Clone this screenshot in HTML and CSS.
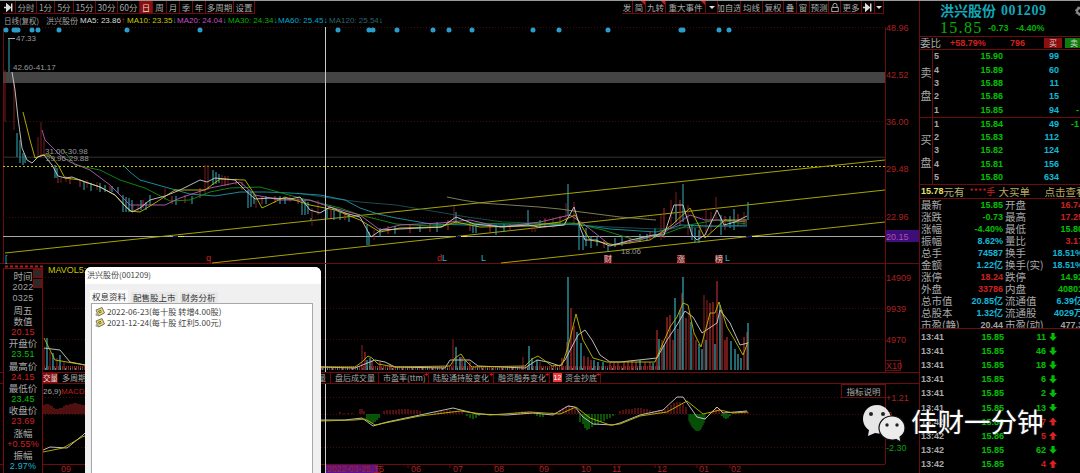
FILE: index.html
```html
<!DOCTYPE html>
<html lang="zh">
<head>
<meta charset="utf-8">
<title>洪兴股份 001209</title>
<link rel="stylesheet" href="styles.css">
</head>
<body>
<div class="app">
  <div class="main">
    <div class="toolbar">
      <div class="tools tools-left">
        <span class="tool"><svg class="ico" viewBox="0 0 11 9"><path d="M0 4.5h5M3 1l4 3.500-4 3.500z M8.500 0v9" stroke="#ddd" stroke-width="1.600" fill="#ddd"/></svg></span>
        <span class="tool">分时</span><span class="tool">1分</span><span class="tool">5分</span><span class="tool">15分</span><span class="tool">30分</span><span class="tool">60分</span>
        <span class="tool tool-on">日</span><span class="tool">周</span><span class="tool">月</span><span class="tool">季</span><span class="tool">年</span><span class="tool">多周期</span><span class="tool">设置</span>
      </div>
      <div class="tools tools-right">
        <span class="tool">发</span><span class="tool flag">简</span><span class="tool flag">九转</span><span class="tool flag">重大事件</span>
        <span class="tool"><i class="caret"></i></span>
        <span class="tool">加自选</span><span class="tool">均线</span><span class="tool">复权</span><span class="tool">叠</span><span class="tool">窗</span><span class="tool">预测</span>
        <span class="tool"><svg class="ico" viewBox="0 0 9 11"><path d="M2 5V3a2.500 2.500 0 0 1 5 0v2M.5 5.500h8v5h-8z" stroke="#ccc" fill="none"/></svg></span>
        <span class="tool">更多</span>
        <span class="tool"><svg class="ico" viewBox="0 0 11 9"><path d="M0 4.5h5M3 1l4 3.500-4 3.500z M8.500 0v9" stroke="#ddd" stroke-width="1.600" fill="#ddd"/></svg></span>
        <span class="tool"><i class="caret"></i></span>
      </div>
    </div>

    <div class="legend">
      <span class="lg-name lg-a">日线(复权)</span>
      <span class="lg-name lg-b">洪兴股份</span>
      <span class="lg lg-5">MA5: 23.86<b class="up">↑</b></span>
      <span class="lg lg-10">MA10: 23.35<b class="dn">↓</b></span>
      <span class="lg lg-20">MA20: 24.04<b class="dn">↓</b></span>
      <span class="lg lg-30">MA30: 24.34<b class="dn">↓</b></span>
      <span class="lg lg-60">MA60: 25.45<b class="dn">↓</b></span>
      <span class="lg lg-120">MA120: 25.54<b class="dn">↓</b></span>
    </div>

    <svg class="pane pane-price" viewBox="0 27 919 237">
      <path class="frame" d="M3.500 27V263M885.500 27V263M0 263.500H919"/>
      <path class="grid" d="M3 27.500H885M3 121.500H885M3 217.500H885"/>
      <rect class="band" x="3" y="72" width="882" height="11"/>
      <rect class="band-thin" x="3" y="156.500" width="882" height="1.500"/>
      <path class="dots" d="M6 30h.01M14 30h.01M16 30h.01M18 30h.01M32 30h.01M38 30h.01M59 30h.01M127 30h.01M200 30h.01M338 30h.01M369 30h.01M373 30h.01M397 30h.01M433 30h.01M449 30h.01M472 30h.01M533 30h.01M559 30h.01M608 30h.01M681 30h.01M683 30h.01M719 30h.01M729 30h.01"/>
      <path class="dash-y" d="M3 166.500H885"/>
      <path class="hline" d="M3 236.500H885"/>
      <path class="chan" d="M5 253L885 160M212 263L885 190M501 263L885 222"/>
      <path class="hblue" d="M173 236.500h5M456 236.500h5M746 236.500h6"/>
      <path class="hyel" d="M178 236.500h6M461 236.500h6M752 236.500h6"/>

      <path class="c-dred" d="M5 70V122M14 83V130M38 137V157M41 122V157M44 140V156M61 178V183M66 176V182M87 180V188M97 182V190M133 205V212M138 204V211M165 188V200M205 165V195M208 165V190M222 175V185M228 176V186M236 178V185M256 200V208M290 195V202M312 208V226M318 200V215M454 206V225M374 230V240M532 225V232M535 225V232M553 218V228M566 203V225M574 202V225M661 215V240M671 200V230M676 192V225M688 205V235M706 208V235M711 212V232M716 197V220M744 212V225"/>
      <path class="c-red" d="M58 178V183M70 177V184M80 180V187M110 186V191M143 200V208M172 196V204M185 195V203M200 188V198M225 176V186M242 182V190M262 197V204M275 196V203M298 198V204M331 210V218M345 212V220M388 226V234M410 225V233M430 223V232M448 220V230M470 222V231M490 224V232M510 224V231M545 218V228M560 216V226M604 240V248M630 236V244M650 232V240M664 208V238M680 200V226M700 225V238M725 216V230M738 214V226"/>
      <path class="c-cy" d="M9 38V72M17 133V157M20 140V163M23 153V165M25 155V163M55 165V178M57 168V178M84 181V190M91 183V191M100 183V192M105 185V192M112 186V192M118 187V193M123 195V212M126 197V212M129 198V212M132 200V212M141 200V210M146 202V210M150 195V205M176 196V205M192 196V204M213 170V185M216 172V184M219 174V183M248 190V208M251 192V207M254 194V204M266 196V204M280 196V204M285 197V204M302 198V215M305 200V215M308 202V214M311 218V221M327 208V218M334 210V220M340 212V220M349 214V222M367 225V245M369 232V245M380 228V237M395 226V234M420 225V232M437 222V232M456 212V224M473 225V233M476 225V233M496 225V235M504 224V232M528 210V225M540 220V228M568 184V215M579 225V250M583 235V250M586 228V246M591 236V248M597 236V246M608 245V252M615 238V247M622 236V246M640 234V242M647 234V240M655 228V238M676 205V222M683 184V222M692 225V240M695 228V242M699 230V243M721 215V235M730 216V228M734 209V230M748 202V220"/>

      <polyline class="ma ma120" points="297,193 330,198 360,202 396,205 432,211 467,217 503,222 560,224 610,227 656,229 700,227 747,225"/>
      <polyline class="ma ma250" points="447,197 462,200 481,203 510,205 539,207 560,209 581,212 620,217 656,220"/>
      <polyline class="ma ma60" points="123,165 130,172 140,180 165,187 190,194 215,196 240,192 265,192 290,193 320,195 345,200 360,208 378,214 396,218 431,224 467,225 503,225 540,225 574,224 610,229 656,232 668,229 681,225 710,226 747,226"/>
      <polyline class="ma ma30" points="63,150 75,165 100,170 120,180 145,188 170,201 190,200 210,192 230,188 260,187 300,198 340,208 360,215 396,224 431,226 467,223 517,224 574,223 603,230 635,240 667,233 689,225 717,220 747,224"/>
      <polyline class="ma ma20" points="42,130 45,140 60,155 70,162 90,170 110,185 130,205 150,205 165,205 180,198 210,188 240,182 255,195 280,200 310,200 330,207 360,215 380,230 400,225 440,223 470,220 500,227 540,222 570,215 585,225 610,245 640,240 665,232 690,215 705,220 725,220 747,222"/>
      <polyline class="ma ma10" points="23,112 30,140 35,158 42,155 50,155 58,165 65,178 80,180 100,187 115,195 130,211 140,212 155,203 175,190 205,190 220,179 245,180 255,195 262,208 285,197 310,205 335,210 360,220 380,232 400,228 440,227 456,222 480,227 530,226 560,222 575,215 590,240 615,245 650,240 672,225 690,208 705,238 725,220 747,220"/>
      <polyline class="ma ma5" points="12,72 15,90 18,118 22,148 27,160 32,163 38,157 44,155 52,165 58,176 65,178 72,177 85,182 100,187 115,195 125,206 132,212 140,208 150,200 165,196 180,190 200,180 207,182 215,178 235,180 245,190 255,199 270,198 290,199 300,197 310,210 320,213 330,207 345,213 360,217 371,237 381,230 399,229 421,228 442,227 456,217 474,224 503,227 528,225 539,227 553,226 564,225 574,207 581,230 585,240 596,240 610,246 631,240 653,235 664,235 674,205 683,205 692,235 697,240 705,235 717,210 724,225 735,222 747,216"/>
      <path class="cursor" d="M325.500 27V263"/>

      <path class="tickm" d="M8 38.500h7"/>
      <text class="t-note" x="16" y="41">47.33</text>
      <text class="t-note" x="13" y="70">42.60-41.17</text>
      <text class="t-note" x="45" y="154">31.00-30.98</text>
      <text class="t-note" x="46" y="161">29.96-29.88</text>
      <text class="t-note" x="621" y="254">18.06</text>
      <text class="t-ax" x="886" y="31">48.96</text>
      <text class="t-ax" x="886" y="78">42.52</text>
      <text class="t-ax" x="886" y="125">36.00</text>
      <text class="t-ax" x="886" y="172">29.48</text>
      <text class="t-ax" x="886" y="220">22.96</text>
      <rect class="cur-box" x="886" y="230" width="33" height="12"/>
      <text class="t-ax t-cur" x="886" y="239.500">20.15</text>
      <text class="t-mk t-mk-cy" x="5" y="262">[</text>
      <text class="t-mk t-mk-rd" x="206" y="261">q</text>
      <text class="t-mk t-mk-rd" x="437" y="261">d</text>
      <text class="t-mk t-mk-cy" x="442" y="261">L</text>
      <text class="t-mk t-mk-cy" x="481" y="261">L</text>
      <rect class="mk-box" x="604" y="255" width="8" height="8"/><text class="t-box" x="604" y="262">财</text>
      <rect class="mk-box" x="677" y="255" width="8" height="8"/><text class="t-box" x="677" y="262">涨</text>
      <rect class="mk-box" x="715" y="255" width="8" height="8"/><text class="t-box" x="715" y="262">榜</text>
      <text class="t-mk t-mk-cy" x="725" y="261">L</text>
    </svg>

    <svg class="pane pane-vol" viewBox="0 264 919 108">
      <path class="frame" d="M885.500 264V372"/>
      <path class="grid" d="M3 277.500H885M3 308.500H885M3 339.500H885"/>
      <path class="vred-line" d="M5 266.500h38"/>
      <text class="t-ma" x="48" y="273">MAVOL5:</text>
      <path class="comb comb-red" d="M44 368H85M321 368H660"/>
      <path class="comb-cy" d="M45 369H85M322 369H640"/>
      <path class="c-dred c-wide" d="M44 348V370M50 352V370M57 358V370M64 362V370M362 345V370M453 339V370M523 357V370M540 362V370M704 295V370M707 300V370M693 333V370M689 312V370"/>
      <path class="c-red c-wide" d="M365 352V370M372 360V370M380 362V370M390 364V370M462 357V370M470 362V370M562 358V370M567 342V370M571 308V370M574 326V370M584 356V370M588 357V370M591 360V370M610 363V370M614 363V370M618 363V370M624 361V370M628 361V370M632 360V370M636 362V370M645 362V370M650 362V370M657 330V370M662 340V370M667 317V370M670 315V370M673 340V370M678 329V370M682 293V370M686 318V370M696 340V370M710 303V370M713 302V370M717 281V370M722 310V370M725 340V370M727 337V370M744 337V370M747 332V370"/>
      <path class="c-cy c-wide" d="M47 338V370M53 353V370M60 355V370M367 360V370M370 358V370M456 347V370M460 357V370M465 361V370M529 346V370M532 358V370M537 360V370M568 277V370M577 332V370M581 343V370M594 360V370M598 362V370M603 362V370M640 360V370M653 363V370M659 339V370M664 345V370M675 298V370M680 310V370M683 277V370M691 322V370M699 344V370M702 349V370M706 340V370M715 344V370M720 305V370M731 341V370M735 349V370M738 354V370M741 358V370M748 323V370"/>
      <polyline class="ma ma5" points="44,348 60,350 70,362 85,365"/>
      <polyline class="ma ma10" points="44,338 50,350 55,360 85,365"/>
      <polyline class="ma ma5" points="321,367 355,368 365,364 375,360 385,362 395,367 445,368 450,360 470,360 478,366 525,368 537,360 548,362 560,366 565,360 578,335 585,330 592,340 600,355 610,362 620,362 657,358 667,340 677,325 685,311 693,317 702,333 717,323 720,310 730,323 740,345 748,343"/>
      <polyline class="ma ma10" points="321,367 355,367 362,362 368,356 372,358 378,364 395,367 450,366 455,358 461,354 465,360 472,367 525,366 532,359 538,356 544,360 552,366 562,365 568,347 576,314 583,340 593,358 607,362 620,362 655,362 660,350 670,327 677,317 683,303 688,305 694,333 701,347 710,313 715,313 719,302 727,327 733,337 743,355 748,342"/>
      <path class="cursor" d="M325.500 264V372"/>
      <text class="t-ax" x="886" y="280.500">14909</text>
      <text class="t-ax" x="886" y="311.500">9939</text>
      <text class="t-ax" x="886" y="342.500">4970</text>
      <rect class="x-box" x="885.500" y="360.500" width="15" height="10"/>
      <text class="t-ax" x="886" y="368.500">X10</text>
    </svg>

    <div class="tabs">
      <span class="tab tab-on">交量</span>
      <span class="tab">多周期同列</span>
      <span class="tab tab-end">换手量</span>
      <span class="tab">盘后成交量</span>
      <span class="tab star">市盈率(ttm)</span>
      <span class="tab star">陆股通持股变化</span>
      <span class="tab star">融资融券变化</span>
      <span class="tab star"><b class="tab-n">12</b>资金抄底</span>
    </div>

    <svg class="pane pane-macd" viewBox="0 384 919 89">
      <path class="frame" d="M885.500 384V464M0 464.500H885M36 464V468M408 464V468M450 464V468M495 464V468M541 464V468M583 464V468M620 464V468M655 464V468M697 464V468M730 464V468"/>
      <path class="grid" d="M3 397.500H885M3 414.500H885M3 447.500H885"/>
      <text class="t-macd-a" x="43" y="394">26,9)</text>
      <text class="t-macd-b" x="61" y="394">MACD:</text>
      <path class="hist-r" d="M44 414V405M46 414V404M48 414V404M50 414V405M52 414V406M54 414V408M56 414V409M58 414V409M60 414V408M62 414V408M64 414V406M66 414V405M68 414V405M70 414V404M72 414V404M74 414V403M76 414V403M78 414V404M80 414V404M82 414V405M84 414V405M320 414V412M340 414V412M344 414V413M348 414V413M352 414V413M360 414V409M362 414V409M364 414V411M384 414V411M387 414V410M390 414V410M393 414V410M396 414V410M399 414V409M402 414V409M405 414V409M408 414V409M411 414V410M414 414V410M417 414V410M420 414V411M435 414V412M438 414V412M441 414V411M444 414V411M447 414V410M450 414V410M453 414V411M456 414V411M459 414V411M462 414V412M510 414V413M513 414V413M516 414V412M519 414V412M522 414V411M525 414V411M528 414V411M531 414V412M534 414V412M552 414V412M556 414V412M560 414V410M563 414V408M566 414V406M569 414V405M572 414V406M575 414V408M578 414V411M620 414V411M623 414V410M626 414V409M629 414V409M632 414V409M635 414V408M638 414V408M641 414V408M644 414V409M647 414V409M650 414V410M653 414V411M656 414V411M659 414V410M662 414V410M665 414V409M668 414V407M671 414V405M674 414V403M677 414V402M680 414V402M683 414V404M686 414V407M710 414V412M713 414V410M716 414V407M719 414V408M722 414V411M733 414V413M736 414V412M739 414V412M742 414V412M745 414V411M748 414V412"/>
      <path class="hist-g" d="M367 414V420M369 414V422M371 414V423M373 414V423M375 414V422M377 414V420M379 414V418M467 414V416M470 414V418M473 414V419M476 414V418M479 414V416M537 414V416M540 414V417M543 414V417M580 414V422M583 414V424M585 414V428M587 414V430M589 414V429M592 414V427M595 414V425M598 414V424M601 414V422M604 414V421M607 414V419M610 414V418M613 414V416M722 414V416M724 414V418M726 414V419M728 414V418M730 414V416"/>
      <path class="hist-dg" d="M689 414V421M690 414V423M691 414V425M692 414V427M693 414V428M694 414V429M695 414V430M696 414V431M697 414V431M698 414V431M699 414V431M700 414V430M701 414V429M702 414V427M703 414V425M704 414V423M705 414V420"/>
      <polyline class="ma ma5" points="43,450 50,447 67,448 83,435 85,433"/>
      <polyline class="ma ma10" points="43,452 63,448 82,437 85,436"/>
      <polyline class="ma ma5" points="321,420 345,420 362,418 373,426 387,422 420,415 453,408 477,414 507,415 533,413 553,415 568,406 575,407 583,417 593,424 613,425 620,423 640,415 663,410 677,397 683,397 697,417 705,419 717,407 723,413 747,411"/>
      <polyline class="ma ma10" points="321,421 355,420 365,419 375,425 395,421 420,416 460,411 490,415 530,412 560,414 576,407 590,418 610,425 620,424 640,416 667,412 687,401 703,414 720,410 733,413 748,412"/>
      <path class="cursor" d="M325.500 384V473"/>
      <text class="t-ax" x="886" y="400.500">+1.21</text>
      <text class="t-ax" x="887" y="417.500">0</text>
      <text class="t-ax t-gn" x="886" y="451">-2.30</text>
      <rect class="date-box" x="326" y="465" width="52" height="8"/>
      <text class="t-x t-date" x="327" y="472">2022-03-25,五</text>
      <text class="t-x" x="379" y="472">5</text>
      <text class="t-x" x="61" y="472">09</text>
      <text class="t-x" x="411" y="472">06</text>
      <text class="t-x" x="453" y="472">07</text>
      <text class="t-x" x="494" y="472">08</text>
      <text class="t-x" x="539" y="472">09</text>
      <text class="t-x" x="581" y="472">10</text>
      <text class="t-x" x="612" y="472">11</text>
      <text class="t-x" x="657" y="472">12</text>
      <text class="t-x" x="699" y="472">01</text>
      <text class="t-x" x="731" y="472">02</text>
    </svg>
    <div class="explain">指标说明</div>
  </div>

  <aside class="panel">
    <div class="head">
      <div class="title"><span>洪兴股份</span><span class="code">001209</span><svg class="gear" viewBox="0 0 10 10"><circle cx="5" cy="5" r="3" fill="none" stroke="#888" stroke-width="2.400"/><circle cx="5" cy="5" r="4.500" fill="none" stroke="#888" stroke-dasharray="1.500 2"/></svg></div>
      <div class="quote"><span class="px">15.85</span><span class="chg">-0.73</span><span class="chg">-4.40%</span></div>
    </div>
    <div class="ratio">
      <span class="lb-big">委比</span><span class="rt-v">+58.79%</span><span class="rt-n">796</span>
      <span class="btn btn-buy">买</span><span class="btn btn-sell">卖</span>
    </div>
    <div class="book book-ask">
      <div class="side"><span>卖</span><span>盘</span></div>
      <div class="rows">
        <div class="brow"><i>5</i><b>15.90</b><em>99</em></div>
        <div class="brow"><i>4</i><b>15.89</b><em>60</em></div>
        <div class="brow"><i>3</i><b>15.88</b><em>11</em></div>
        <div class="brow"><i>2</i><b>15.86</b><em>15</em></div>
        <div class="brow"><i>1</i><b>15.85</b><em>94</em><u>-</u></div>
      </div>
    </div>
    <div class="book book-bid">
      <div class="side"><span>买</span><span>盘</span></div>
      <div class="rows">
        <div class="brow"><i>1</i><b>15.84</b><em>49</em><u>-1</u></div>
        <div class="brow"><i>2</i><b>15.83</b><em>112</em></div>
        <div class="brow"><i>3</i><b>15.82</b><em>124</em></div>
        <div class="brow"><i>4</i><b>15.81</b><em>156</em></div>
        <div class="brow"><i>5</i><b>15.80</b><em>634</em></div>
      </div>
    </div>
    <div class="bigorder"><span class="bo-y">15.78</span><span class="bo-g">元有</span><span class="bo-r">****手</span><span class="bo-l">大买单</span><span class="bo-l">点击查看</span></div>
    <div class="info">
      <div class="irow"><span>最新</span><b class="gn">15.85</b><span>开盘</span><b class="rd">16.74</b></div>
      <div class="irow"><span>涨跌</span><b class="gn">-0.73</b><span>最高</span><b class="rd">17.25</b></div>
      <div class="irow"><span>涨幅</span><b class="gn">-4.40%</b><span>最低</span><b class="gn">15.80</b></div>
      <div class="irow"><span>振幅</span><b class="cy">8.62%</b><span>量比</span><b class="rd">3.17</b></div>
      <div class="irow"><span>总手</span><b class="cy">74587</b><span>换手</span><b class="cy">18.51%</b></div>
      <div class="irow"><span>金额</span><b class="cy">1.22亿</b><span>换手(实)</span><b class="cy">18.51%</b></div>
      <div class="irow"><span>涨停</span><b class="rd">18.24</b><span>跌停</span><b class="gn">14.92</b></div>
      <div class="irow"><span>外盘</span><b class="rd">33786</b><span>内盘</span><b class="gn">40801</b></div>
      <div class="irow"><span>总市值</span><b class="cy">20.85亿</b><span>流通值</span><b class="cy">6.39亿</b></div>
      <div class="irow"><span>总股本</span><b class="cy">1.32亿</b><span>流通股</span><b class="cy">4029万</b></div>
      <div class="irow"><span>市盈(静)</span><b class="gy">20.44</b><span>市盈(动)</span><b class="gy">477.3</b></div>
    </div>
    <div class="ticks">
      <div class="trow"><span>13:41</span><b>15.85</b><em>11</em><i class="arr arr-d"></i></div>
      <div class="trow"><span>13:41</span><b>15.85</b><em>46</em><i class="arr arr-d"></i></div>
      <div class="trow"><span>13:41</span><b>15.85</b><em>18</em><i class="arr arr-d"></i></div>
      <div class="trow"><span>13:41</span><b>15.85</b><em>6</em><i class="arr arr-d"></i></div>
      <div class="trow"><span>13:41</span><b>15.85</b><em>2</em><i class="arr arr-d"></i></div>
      <div class="trow"><span>13:41</span><b>15.85</b><em>13</em><i class="arr arr-d"></i></div>
      <div class="trow"><span>13:42</span><b>15.86</b><em class="rd">7</em><i class="arr arr-u"></i></div>
      <div class="trow"><span>13:42</span><b>15.86</b><em class="rd">5</em><i class="arr arr-u"></i></div>
      <div class="trow"><span>13:42</span><b>15.85</b><em>62</em><i class="arr arr-d"></i></div>
      <div class="trow"><span>13:42</span><b>15.85</b><em class="rd">4</em><i class="arr arr-u"></i></div>
    </div>
  </aside>

  <div class="readout">
    <span class="ro-x"></span><span class="ro-s"></span>
    <span class="ro-l">时间</span><span class="ro-v gy">2022</span><span class="ro-v gy">0325</span><span class="ro-l">周五</span>
    <span class="ro-l">数值</span><span class="ro-v rd">20.15</span>
    <span class="ro-l">开盘价</span><span class="ro-v gn">23.51</span>
    <span class="ro-l">最高价</span><span class="ro-v rd">24.15</span>
    <span class="ro-l">最低价</span><span class="ro-v gn">23.45</span>
    <span class="ro-l">收盘价</span><span class="ro-v rd">23.69</span>
    <span class="ro-l">涨幅</span><span class="ro-v rd">+0.55%</span>
    <span class="ro-l">振幅</span><span class="ro-v cy">2.97%</span>
  </div>

  <div class="dialog">
    <div class="dlg-title">洪兴股份(001209)</div>
    <div class="dlg-body">
      <div class="dlg-tabs">
        <span class="dlg-tab dlg-tab-on">权息资料</span><span class="dlg-tab">配售股上市</span><span class="dlg-tab">财务分析</span>
      </div>
      <div class="dlg-list">
        <div class="dlg-item"><svg class="note" viewBox="0 0 10 10"><path d="M1 3l6-2.500 2.500 5.500-6 3z" fill="#e8d66a" stroke="#776"/><path d="M3 4.500l3-1.200M3.600 6l3-1.200" stroke="#665"/><circle cx="2" cy="7.500" r="1.500" fill="#9a9"/></svg>2022-06-23(每十股 转增4.00股)</div>
        <div class="dlg-item"><svg class="note" viewBox="0 0 10 10"><path d="M1 3l6-2.500 2.500 5.500-6 3z" fill="#e8d66a" stroke="#776"/><path d="M3 4.500l3-1.200M3.600 6l3-1.200" stroke="#665"/><circle cx="2" cy="7.500" r="1.500" fill="#9a9"/></svg>2021-12-24(每十股 红利5.00元)</div>
      </div>
    </div>
  </div>

  <div class="mark">
    <svg class="mark-ico" viewBox="0 0 44 38">
      <path d="M15 1C7 1 1 7 1 15c0 5 3 9 6 11l-1 6 7-3c2 .5 4 .5 6 .2L30 20C30 9 24 1 15 1z" fill="#e6e6e6"/>
      <circle cx="9" cy="10" r="2" fill="#222"/><circle cx="21" cy="10" r="2" fill="#222"/>
      <path d="M30 12c-8 0-13 6-13 12s5 12 13 12c2 0 3 0 4-.5l5 2.500-1-5c3-2 5-5 5-9 0-6-5-12-13-12z" fill="#ececec" stroke="#111" stroke-width="1.200"/>
      <circle cx="25" cy="21" r="1.700" fill="#222"/><circle cx="35" cy="21" r="1.700" fill="#222"/>
    </svg>
    <span class="mark-t">佳财一分钟</span>
  </div>
</div>
</body>
</html>
```
FILE: styles.css
```css
* { box-sizing: border-box; }
html, body { margin: 0; padding: 0; background: #000; }
body { width: 1080px; height: 473px; overflow: hidden; }
i, em, b, u { font-style: normal; text-decoration: none; font-weight: inherit; }

.app {
  position: relative; display: flex; width: 1080px; height: 473px; overflow: hidden;
  background: #000; border-top: 1px solid #9a9a9a;
  font-family: "Noto Sans CJK SC", "Liberation Sans", sans-serif; color: #a8a8a8;
}
.main { position: relative; width: 919px; flex: none; display: flex; flex-direction: column; }

/* toolbar */
.toolbar { display: flex; justify-content: space-between; height: 13px; padding: 0 35px 0 3px; flex: none; }
.tools { display: grid; height: 13px; font-size: 8.5px; line-height: 12px; }
.tools-left { grid-template-columns: 13px 21px 18px 19px 22px 22px 22px 13px 14px 13px 13px 13px 28px 21px; }
.tools-right { grid-template-columns: 11px 13px 20px 40px 12px 23px 22px 21px 13px 13px 19px 12px 21px 13px 9px; }
.tool { position: relative; display: flex; align-items: center; justify-content: center; white-space: nowrap; border-right: 1px solid #6d0c0c; border-bottom: 1px solid #6d0c0c; overflow: hidden; }
.tool-on { background: #8c0f0f; color: #ddd; }
.flag::after { content: ""; position: absolute; top: 0; right: 0; border-top: 4px solid #e01010; border-left: 4px solid transparent; }
.ico { width: 10px; height: 9px; }
.caret { width: 0; height: 0; border-top: 3px solid #ddd; border-left: 3px solid transparent; border-right: 3px solid transparent; }

/* legend */
.legend { display: flex; align-items: center; height: 13px; flex: none; padding-left: 4px; font-family: "Liberation Sans", sans-serif; font-size: 8px; white-space: nowrap; }
.legend > span { flex: none; }
.lg-name { font-family: "Noto Sans CJK SC", sans-serif; font-size: 8px; color: #a0a0a0; }
.lg-a { width: 42px; font-size: 7.5px; }
.lg-b { width: 34px; }
.lg { display: block; }
.lg b { font-size: 8px; margin-left: 0; }
.lg b.up { color: #d02020; }
.lg b.dn { color: #20a8b0; }
.lg-5 { width: 47px; color: #d8d8d8; }
.lg-10 { width: 50px; color: #c8c800; }
.lg-20 { width: 51px; color: #c050c0; }
.lg-30 { width: 50px; color: #00b400; }
.lg-60 { width: 51px; color: #00a8c8; }
.lg-120 { color: #2a6468; }

/* panes */
.pane { display: block; width: 919px; flex: none; overflow: visible; }
.pane-price { height: 237px; }
.pane-vol { height: 108px; }
.pane-macd { height: 89px; }

.frame { stroke: #6d0c0c; fill: none; }
.grid { stroke: #4a0808; stroke-dasharray: 1 2; fill: none; }
.band { fill: #444; }
.band-thin { fill: #232323; }
.dots { stroke: #2a9dcc; stroke-width: 5; stroke-linecap: round; fill: none; }
.dash-y { stroke: #d0c000; stroke-dasharray: 2 2; fill: none; }
.hline { stroke: #a8a8a8; fill: none; }
.chan { stroke: #a8a400; fill: none; }
.hblue { stroke: #10108a; fill: none; }
.hyel { stroke: #e8e840; fill: none; }
.cursor { stroke: #c8c8c8; fill: none; }
.tickm { stroke: #aaa; fill: none; }
.ma { fill: none; stroke-width: .9; }
.ma5 { stroke: #d0d0d0; }
.ma10 { stroke: #c0bc00; }
.ma20 { stroke: #b460b8; }
.ma30 { stroke: #129212; }
.ma60 { stroke: #1c98a8; }
.ma120 { stroke: #1d5358; }
.ma250 { stroke: #8a8a62; }
.c-red { stroke: #b82a2a; fill: none; }
.c-dred { stroke: #7c1c1c; fill: none; }
.c-cy { stroke: #34aebc; fill: none; }
.c-wide { stroke-width: 1.200; }
.comb { fill: none; stroke-width: 4; stroke-dasharray: 1 1; }
.comb-red { stroke: #8c2020; }
.comb-cy { fill: none; stroke: #2f9aa8; stroke-width: 2; stroke-dasharray: 1 4; }
.vred-line { stroke: #b02020; stroke-width: 2; stroke-dasharray: 3 2; fill: none; }
.hist-r { stroke: #a02020; fill: none; }
.hist-g { stroke: #0ea80e; fill: none; }
.hist-dg { stroke: #0a6a0a; fill: none; }

svg text { font-family: "Liberation Sans", sans-serif; }
.t-note { font-size: 8px; fill: #9a9a9a; }
.t-ax { font-size: 9px; fill: #a82222; }
.t-gn { fill: #10a010; }
.t-cur { fill: #b050b0; }
.cur-box { fill: #3d0e7a; }
.t-mk { font-size: 9px; }
.t-mk-cy { fill: #22b8c8; }
.t-mk-rd { fill: #d02020; }
.mk-box { fill: #7c1414; }
.t-box { font-family: "Noto Sans CJK SC", sans-serif; font-size: 8px; fill: #ccc; }
.t-ma { font-size: 9px; fill: #c8c800; }
.x-box { fill: none; stroke: #6d0c0c; }
.t-macd-a { font-size: 8px; fill: #a0a0a0; }
.t-macd-b { font-size: 8px; fill: #c01818; }
.t-x { font-size: 9px; fill: #a82222; }
.t-date { font-size: 8.500px; font-family: "Liberation Sans", "Noto Sans CJK SC", sans-serif; }
.date-box { fill: #5a148c; }

/* tab bar */
.tabs { display: grid; grid-template-columns: 15px 142px 131px 48px 50px 65px 56px 51px; height: 12px; flex: none; padding-left: 43px; padding-right: 38px; border-top: 1px solid #6d0c0c; border-bottom: 1px solid #6d0c0c; font-size: 8px; line-height: 10px; white-space: nowrap; width: 919px; }
.tab { position: relative; border-right: 1px solid #6d0c0c; padding-left: 4px; overflow: hidden; }
.tab-on { background: #8c0f0f; color: #ddd; padding-left: 0; font-size: 7.500px; }
.tab-end { text-align: right; padding-right: 4px; }
.star::after { content: "+"; position: absolute; top: -2px; right: 0; font: bold 7px/7px "Liberation Sans", sans-serif; color: #e01010; }
.tab-n { display: inline-block; width: 9px; height: 9px; margin-right: 3px; margin-left: -1px; background: #e83a3a; color: #fff; font: 7px/9px "Liberation Sans", sans-serif; text-align: center; vertical-align: top; }
.explain { position: absolute; left: 841px; top: 383px; width: 44px; height: 14px; border: 1px solid #6d0c0c; border-right: 0; background: #000; font-size: 8.500px; line-height: 12px; text-align: center; }

/* right panel */
.panel { width: 161px; flex: none; border-left: 1px solid #6d0c0c; overflow: hidden; display: flex; flex-direction: column; }
.head { height: 36px; flex: none; border-bottom: 1px solid #6d0c0c; padding-left: 20px; }
.title { display: flex; align-items: center; height: 19px; font-size: 14px; line-height: 19px; font-weight: 700; color: #10a8b8; white-space: nowrap; }
.code { font-family: "Liberation Serif", serif; font-size: 14px; margin-left: 5px; letter-spacing: .6px; }
.gear { width: 10px; height: 10px; margin-left: 28px; flex: none; }
.quote { display: flex; align-items: center; height: 16px; color: #00b400; font: bold 9px/16px "Liberation Sans", sans-serif; }
.px { font: 16px/16px "Liberation Serif", serif; letter-spacing: 1.300px; width: 48px; flex: none; }
.chg { width: 28px; flex: none; }

.ratio { display: flex; align-items: center; height: 13px; flex: none; border-bottom: 1px solid #6d0c0c; font: bold 9px/12px "Liberation Sans", sans-serif; color: #d02020; }
.ratio > span { flex: none; }
.lb-big { width: 30px; font: 10.500px/12px "Noto Sans CJK SC", sans-serif; color: #a8a8a8; white-space: nowrap; }
.rt-v { width: 60px; }
.rt-n { width: 34px; }
.btn { height: 10px; font: 8px/10px "Noto Sans CJK SC", sans-serif; text-align: center; color: #ccc; }
.btn-buy { width: 18px; background: #8c0f0f; margin-right: 3px; }
.btn-sell { width: 18px; background: #0d7a0d; }

.book { display: flex; flex: none; border-bottom: 1px solid #6d0c0c; }
.book-ask { height: 68px; }
.book-bid { height: 67px; }
.side { width: 13px; flex: none; display: flex; flex-direction: column; align-items: center; justify-content: center; gap: 12px; border-right: 1px solid #6d0c0c; font-size: 11px; line-height: 11px; }
.rows { flex: 1; display: grid; grid-auto-rows: 1fr; }
.brow { position: relative; display: grid; grid-template-columns: 8px 62px 56px 20px; align-items: center; font: bold 9px/13px "Liberation Sans", sans-serif; color: #00c000; }
.brow i { color: #a8a8a8; padding-left: 1px; }
.brow b { text-align: right; }
.brow em { color: #10b8d8; text-align: right; }
.brow u { text-align: right; }

.bigorder { display: flex; align-items: center; height: 14px; flex: none; border-bottom: 1px solid #6d0c0c; padding-left: 1px; font-size: 10.5px; line-height: 13px; white-space: nowrap; }
.bigorder > span { flex: none; }
.bo-y { font: bold 9px/13px "Liberation Sans", sans-serif; color: #e8e070; }
.bo-g { color: #b8b070; width: 26px; }
.bo-r { color: #c82020; width: 29px; font-size: 9px; }
.bo-l { color: #b8a860; width: 46px; }

.info { height: 130px; flex: none; border-bottom: 1px solid #6d0c0c; overflow: hidden; }
.irow { display: grid; grid-template-columns: 32px 50px 38px 42px; height: 12px; padding-left: 1px; align-items: center; font-size: 10.5px; line-height: 12px; white-space: nowrap; }
.irow b { text-align: right; font: bold 9px/12px "Liberation Sans", "Noto Sans CJK SC", sans-serif; }
.irow span:nth-child(3) { padding-left: 2px; }

.ticks { flex: 1; padding-top: 1px; }
.trow { display: grid; grid-template-columns: 50px 33px 42px 3px 8px; height: 14.1px; padding-left: 1px; align-items: center; font: bold 9px/14px "Liberation Sans", sans-serif; color: #00c000; }
.trow span { color: #a8a8a8; }
.trow b { text-align: right; }
.trow em { text-align: right; grid-column: 3; }
.arr { grid-column: 5; display: block; width: 8px; height: 8px; }
.arr-d { background: #00c000; clip-path: polygon(30% 0, 70% 0, 70% 45%, 100% 45%, 50% 100%, 0 45%, 30% 45%); }
.arr-u { background: #e02020; clip-path: polygon(50% 0, 100% 55%, 70% 55%, 70% 100%, 30% 100%, 30% 55%, 0 55%); }

.gn { color: #00c000; }
.rd { color: #d02020; }
.cy { color: #10b8d8; }
.gy { color: #a0a0a0; }

/* crosshair readout */
.readout { position: absolute; left: 3px; top: 267px; width: 40px; height: 206px; display: flex; flex-direction: column; align-items: center; background: #000; border: 1px solid #7a0c0c; padding-top: 2px; }
.ro-x, .ro-s { position: absolute; right: 0; width: 9px; height: 9px; border: 1px solid #7a0c0c; background: #2a2a2a; }
.ro-x { top: 0; }
.ro-s { top: 10px; }
.ro-l { font-size: 9.500px; line-height: 11.200px; height: 11.200px; white-space: nowrap; }
.ro-v { font: 9px/11.200px "Liberation Sans", sans-serif; height: 11.200px; letter-spacing: .2px; }

/* dialog */
.dialog { position: absolute; left: 85px; top: 266px; width: 236px; height: 210px; background: #f0f0f0; border-radius: 6px 6px 0 0; color: #333; }
.dlg-title { height: 17px; padding-left: 2px; background: #fff; border-radius: 6px 6px 0 0; font-size: 8px; line-height: 16px; color: #444; }
.dlg-body { padding: 6px 8px 0 5px; }
.dlg-tabs { display: flex; height: 13px; align-items: flex-end; font-size: 8.500px; color: #333; padding-left: 0; }
.dlg-tab { height: 11px; line-height: 10px; padding: 0 2px; margin-right: 2px; background: #e8e8e8; white-space: nowrap; }
.dlg-tab-on { height: 13px; line-height: 12px; background: #fbfbfb; padding: 0 2px; margin-right: 3px; }
.dlg-list { height: 180px; margin-left: 1px; padding: 2px 0 0 3px; background: #fff; border: 1px solid #a8a8a8; font: 8.200px/11px "Noto Sans CJK SC", sans-serif; color: #444; }
.dlg-item { display: flex; align-items: center; gap: 2px; height: 11px; white-space: nowrap; }
.note { width: 10px; height: 10px; flex: none; }

/* watermark */
.mark { position: absolute; left: 862px; top: 403px; display: flex; align-items: center; gap: 5px; pointer-events: none; }
.mark-ico { width: 44px; height: 38px; flex: none; }
.mark-t { font-size: 26.500px; line-height: 30px; color: #fff; white-space: nowrap; text-shadow: 0 0 2px #555; margin-top: -4px; }
```
